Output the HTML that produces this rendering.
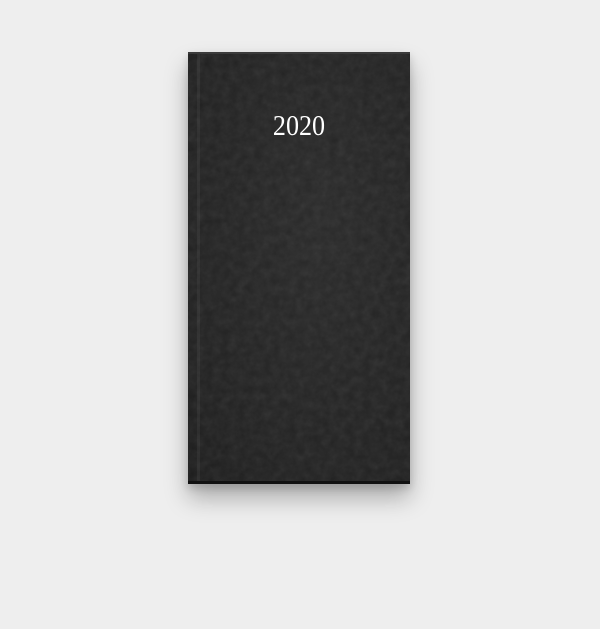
<!DOCTYPE html>
<html><head><style>
html,body{margin:0;padding:0}
body{width:600px;height:629px;background:#eeeeee;position:relative;overflow:hidden}
.book{position:absolute;left:188px;top:52px;width:222px;height:432px;
background:radial-gradient(ellipse at 60% 40%,#2a2a2a,#222 70%,#1d1d1d);
box-shadow:0 14px 22px rgba(0,0,0,0.28),0 4px 8px rgba(0,0,0,0.15);}
.book:before{content:"";position:absolute;left:9px;top:0;bottom:0;width:3px;background:rgba(255,255,255,0.05)}
.book:after{content:"";position:absolute;left:0;right:0;top:0;height:2px;background:#3a3a3a}
.bot{position:absolute;left:0;right:0;bottom:0;height:3px;background:#111}
.t{position:absolute;left:0;right:0;top:58px;text-align:center;color:#fff;
font-family:"Liberation Serif",serif;font-size:29px;transform:scaleX(0.9)}
</style></head><body>
<div class="book"><svg width="222" height="432" style="position:absolute;left:0;top:0;opacity:0.1">
<filter id="n"><feTurbulence type="fractalNoise" baseFrequency="0.12" numOctaves="3"/><feColorMatrix type="saturate" values="0"/></filter>
<rect width="222" height="432" filter="url(#n)"/></svg>
<div class="bot"></div><div class="t">2020</div></div>
</body></html>
